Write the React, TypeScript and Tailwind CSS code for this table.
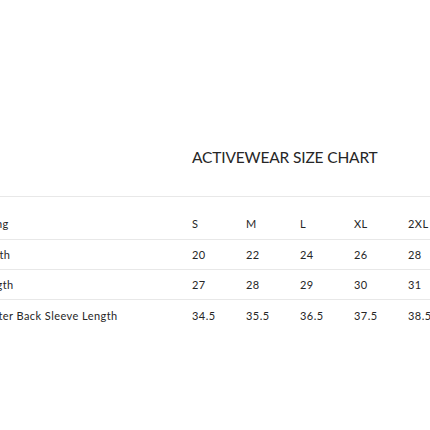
import React from 'react';

const SizeChart = () => {
  const sizes = ["S", "M", "L", "XL", "2XL"];
  const rows = [
    { label: "Width", values: ["20", "22", "24", "26", "28"] },
    { label: "Length", values: ["27", "28", "29", "30", "31"] },
    { label: "Center Back Sleeve Length", values: ["34.5", "35.5", "36.5", "37.5", "38.5"] }
  ];

  return (
    <div className="w-[430px] h-[430px] bg-white overflow-hidden text-[#262626] font-['Lato','Open_Sans',sans-serif]">
      <div className="ml-[-22px] w-[560px] pt-[147px]">
        {/* Title */}
        <h1 className="pl-[214px] text-[15.5px] leading-[20px] tracking-[-0.01em] mb-[29px]">ACTIVEWEAR SIZE CHART</h1>

        {/* Table */}
        <div className="border-t border-[#e8e8e8]">
          <div className="flex items-center h-[43px] border-b border-[#e8e8e8] text-[11px] tracking-[0.04em]">
            <div className="w-[214px] pt-[12px]">Sizing</div>
            {sizes.map((size, idx) => (
              <div key={idx} className="w-[54px] pt-[12px]">{size}</div>
            ))}
          </div>
          {rows.map((row, index) => (
            <div
              key={index}
              className={`flex items-center h-[30px] text-[11px] tracking-[0.04em] ${index < rows.length - 1 ? 'border-b border-[#e8e8e8]' : ''}`}
            >
              <div className="w-[214px] pt-[2px]">{row.label}</div>
              {row.values.map((value, idx) => (
                <div key={idx} className="w-[54px] pt-[2px]">{value}</div>
              ))}
            </div>
          ))}
        </div>
      </div>
    </div>
  );
};

export default function App() {
  return <SizeChart />;
}
